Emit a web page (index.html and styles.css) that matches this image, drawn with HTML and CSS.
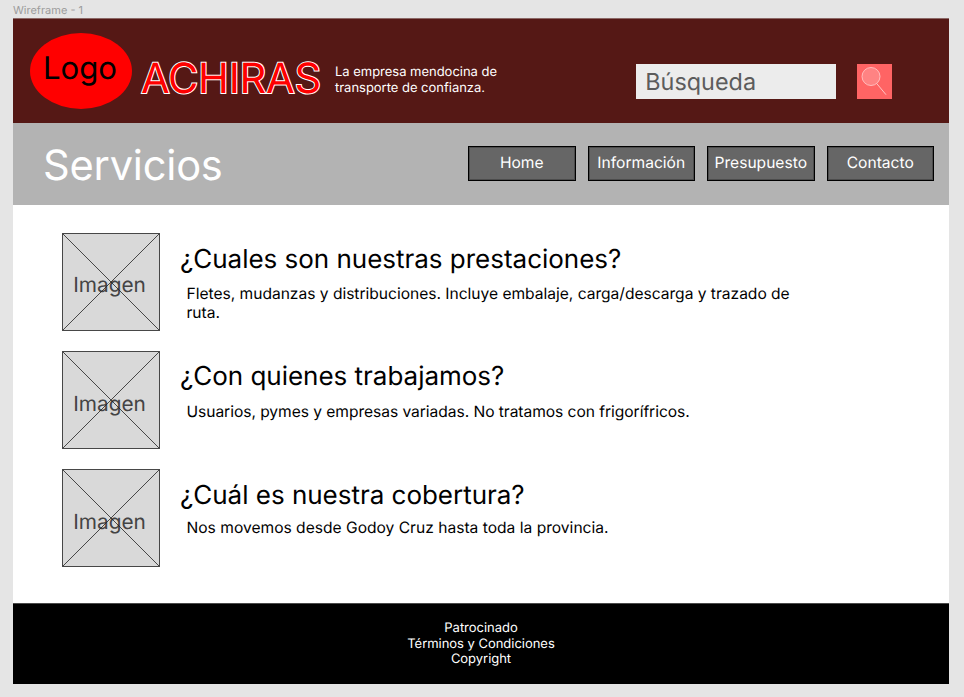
FILE: index.html
```html
<!DOCTYPE html>
<html lang="es">
<head>
<meta charset="utf-8">
<title>Achiras - Servicios</title>
<link rel="stylesheet" href="styles.css">
</head>
<body>
<div class="frame-label">Wireframe - 1</div>
<div class="frame">
  <header class="header">
    <div class="logo"><span>Logo</span></div>
    <div class="brand">ACHIRAS</div>
    <p class="tagline">La empresa mendocina de<br>transporte de confianza.</p>
    <div class="search">Búsqueda</div>
    <div class="search-button">
      <svg width="35" height="35" viewBox="0 0 35 35"><circle cx="14" cy="12.5" r="9" fill="#fff" fill-opacity=".2" stroke="#ffc4c4" stroke-width=".9"/><path d="M19.7 19.5 29 30.7" stroke="#ffc4c4" stroke-width="1"/></svg>
    </div>
  </header>
  <div class="titlebar">
    <h1>Servicios</h1>
    <nav class="nav">
      <a>Home</a><a>Información</a><a>Presupuesto</a><a>Contacto</a>
    </nav>
  </div>
  <main class="main">
    <section class="item">
      <div class="image"><span>Imagen</span><svg viewBox="0 0 98 98"><path d="M.5.5h97v97H.5zM.5.5l97 97M97.5.5l-97 97"/></svg></div>
      <div class="text first"><h2>¿Cuales son nuestras prestaciones?</h2><p>Fletes, mudanzas y distribuciones. Incluye embalaje, carga/descarga y trazado de<br>ruta.</p></div>
    </section>
    <section class="item">
      <div class="image lower"><span>Imagen</span><svg viewBox="0 0 98 98"><path d="M.5.5h97v97H.5zM.5.5l97 97M97.5.5l-97 97"/></svg></div>
      <div class="text second"><h2>¿Con quienes trabajamos?</h2><p>Usuarios, pymes y empresas variadas. No tratamos con frigorífricos.</p></div>
    </section>
    <section class="item">
      <div class="image lower"><span>Imagen</span><svg viewBox="0 0 98 98"><path d="M.5.5h97v97H.5zM.5.5l97 97M97.5.5l-97 97"/></svg></div>
      <div class="text third"><h2>¿Cuál es nuestra cobertura?</h2><p>Nos movemos desde Godoy Cruz hasta toda la provincia.</p></div>
    </section>
  </main>
  <footer class="footer">Patrocinado<br>Términos y Condiciones<br>Copyright</footer>
</div>
</body>
</html>
```

FILE: styles.css
```css
* { box-sizing: border-box; }
body {
  margin: 0;
  height: 697px;
  overflow: hidden;
  background: #e5e5e5;
  font-family: Inter, "Liberation Sans", sans-serif;
  line-height: 1.21;
  text-rendering: geometricPrecision;
  color: #000;
}
h1, h2, p { margin: 0; font-weight: 400; }
.frame-label {
  height: 18px;
  padding: 4px 0 0 13px;
  font-size: 11px;
  line-height: 13px;
  color: #9c9c9c;
}
.frame { width: 936px; margin-left: 13px; background: #fff; }
.header {
  display: flex;
  align-items: flex-start;
  height: 105px;
  background: #551815;
  border-top: 1px solid #8b6866;
}
.logo {
  width: 102px;
  height: 76px;
  margin: 14px 0 0 17px;
  padding: 17px 2px 0 0;
  border-radius: 50%;
  background: #f00;
  font-size: 31.2px;
  text-align: center;
}
.brand {
  width: 194px;
  margin: 35px 0 0 9px;
  font-size: 41.6px;
  letter-spacing: -0.3px;
  color: #f00;
  -webkit-text-stroke: 2px #fff;
  paint-order: stroke fill;
  white-space: nowrap;
}
.tagline {
  width: 301px;
  margin-top: 46px;
  font-size: 13px;
  letter-spacing: -0.02px;
  color: #fff;
  white-space: nowrap;
}
.search {
  width: 199.5px;
  height: 35px;
  margin-top: 45px;
  padding: 4px 0 0 9.3px;
  background: #ececec;
  font-size: 23.4px;
  color: #5c5c5c;
}
.search-button {
  width: 35px;
  height: 35px;
  margin: 45px 0 0 21.5px;
  background: #ff6464;
}
.search-button svg { display: block; }
.titlebar {
  display: flex;
  justify-content: space-between;
  height: 82px;
  padding: 17px 15px 0 30px;
  background: #b3b3b3;
}
.titlebar h1 { padding-top: 1px; font-size: 41.6px; letter-spacing: -0.2px; color: #fff; }
.nav { display: flex; gap: 12px; padding-top: 6px; }
.nav a {
  width: 107.5px;
  height: 35px;
  padding-top: 7px;
  border: 1.3px solid #000;
  outline: 0.5px solid rgba(0, 0, 0, 0.25);
  outline-offset: -2px;
  background: #666;
  font-size: 15.6px;
  color: #fff;
  text-align: center;
}
.main {
  display: flex;
  flex-direction: column;
  gap: 20.2px;
  height: 398px;
  padding: 28px 0 0 48.5px;
}
.item { display: flex; height: 98px; }
.image {
  position: relative;
  width: 98px;
  height: 98px;
  padding-top: 39.8px;
  background: #d9d9d9;
  font-size: 20.8px;
  color: #444;
  text-align: center;
}
.lower { padding-top: 40.5px; }
.image span { display: block; margin-left: -2px; }
.image svg {
  position: absolute;
  inset: 0;
  fill: none;
  stroke: #222;
  stroke-width: .8;
}
.text { padding-left: 20.5px; white-space: nowrap; }
.text h2 { font-size: 26px; letter-spacing: -0.02px; }
.text p { padding-left: 6.5px; font-size: 15.6px; letter-spacing: -0.02px; }
.first { padding-top: 10.5px; }
.first p { margin-top: 10.3px; }
.second { padding-top: 10px; }
.second p { margin-top: 10.5px; letter-spacing: -0.05px; }
.third { padding-top: 11px; }
.third p { margin-top: 7.5px; letter-spacing: 0; }
.footer {
  height: 81px;
  padding-top: 16.9px;
  border-top: 1px solid #4a4a4a;
  background: #000;
  font-size: 13px;
  letter-spacing: -0.03px;
  color: #fff;
  text-align: center;
}
```
